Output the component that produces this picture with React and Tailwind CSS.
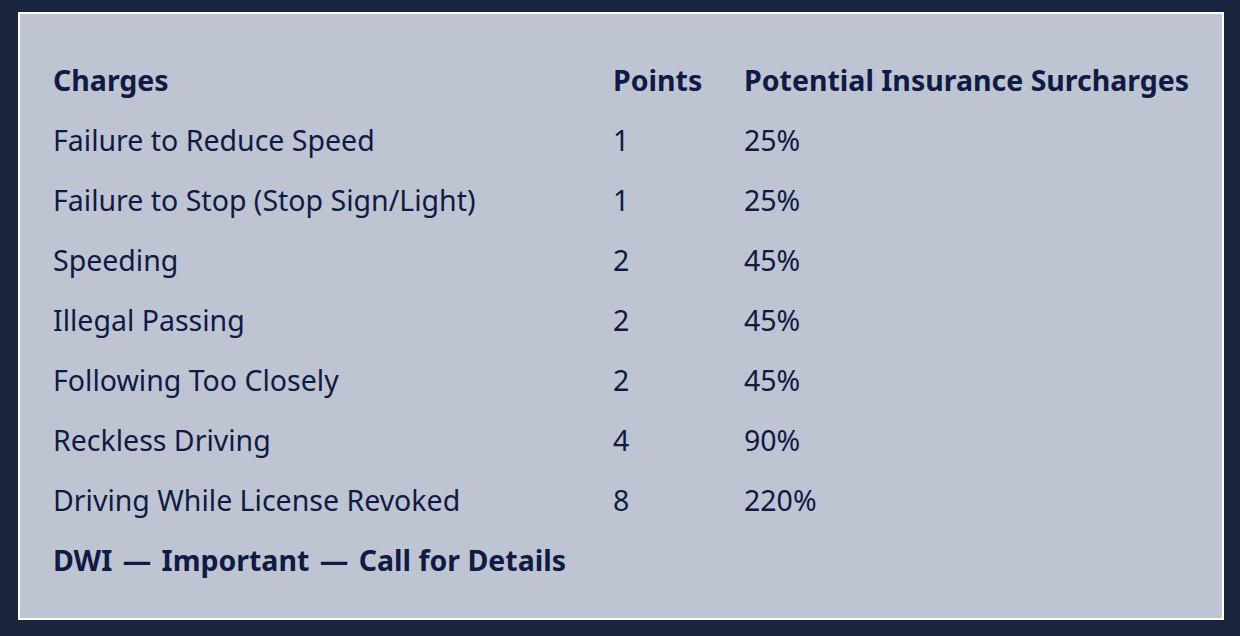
import React from 'react';

const rows = [
    ['Failure to Reduce Speed', '1', '25%'],
    ['Failure to Stop (Stop Sign/Light)', '1', '25%'],
    ['Speeding', '2', '45%'],
    ['Illegal Passing', '2', '45%'],
    ['Following Too Closely', '2', '45%'],
    ['Reckless Driving', '4', '90%'],
    ['Driving While License Revoked', '8', '220%'],
];

const App = () => {
    return (
        <div
            className="w-[1240px] h-[636px] bg-[#1a2540] pt-[12px] pl-[18px]"
            style={{ fontFamily: '"Noto Sans", "Open Sans", sans-serif' }}
        >
            <div className="w-[1206px] h-[608px] bg-[#bec4d2] border-2 border-white pt-[36px] pl-[33px] text-[#0f1a45]">
                <div className="grid grid-cols-[560px_131px_1fr] text-[28.5px] leading-[60px]">
                    <div className="font-bold">Charges</div>
                    <div className="font-bold">Points</div>
                    <div className="font-bold">Potential Insurance Surcharges</div>
                    {rows.map(([charge, pts, pct]) => (
                        <React.Fragment key={charge}>
                            <div>{charge}</div>
                            <div>{pts}</div>
                            <div>{pct}</div>
                        </React.Fragment>
                    ))}
                    <div className="font-bold col-span-3">
                        DWI <span className="mx-[3px]">—</span> Important <span className="mx-[3px]">—</span> Call for Details
                    </div>
                </div>
            </div>
        </div>
    );
};

export default App;
